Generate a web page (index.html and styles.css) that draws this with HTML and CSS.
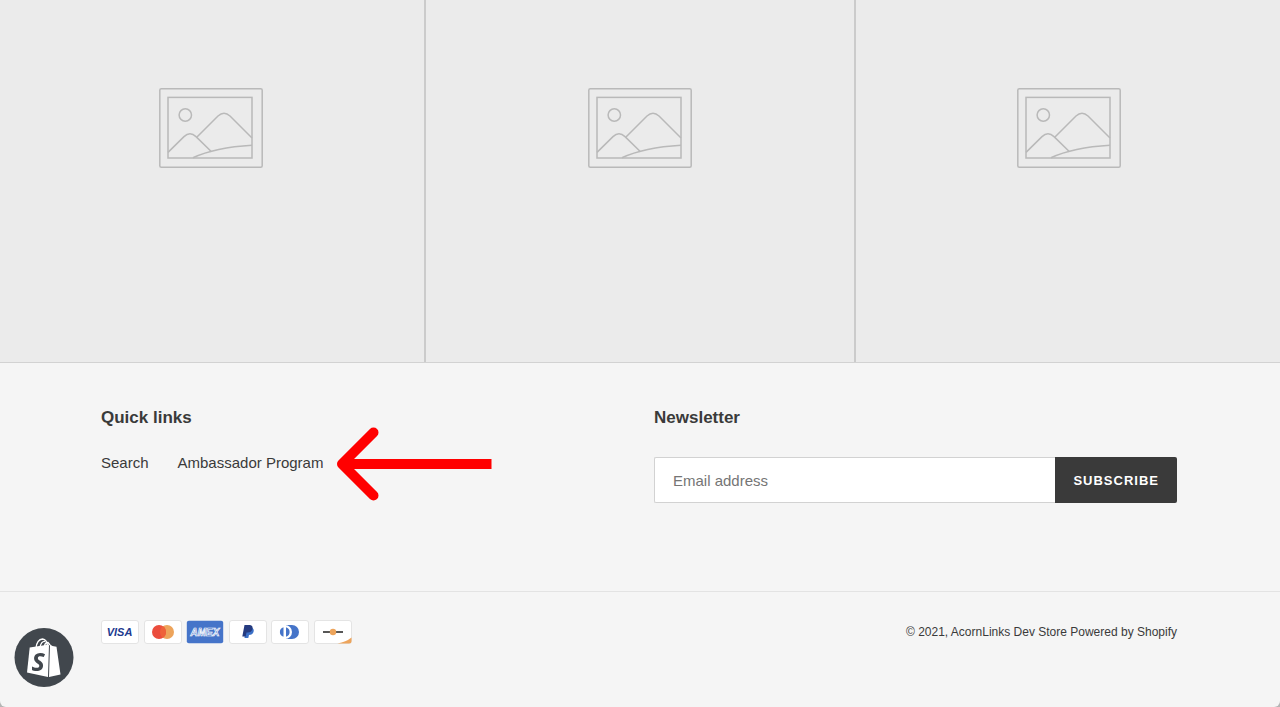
FILE: index.html
```html
<!DOCTYPE html>
<html lang="en">

<head>
    <meta charset="UTF-8">
    <meta name="viewport" content="width=device-width, initial-scale=1.0">
    <title>AcornLinks Dev Store</title>
    <link rel="stylesheet" href="styles.css">
</head>

<body>
    <svg class="sprite" aria-hidden="true">
        <symbol id="placeholder-image" viewBox="0 0 104 80">
            <g fill="none" stroke="#b9b9b9" stroke-width="1.5">
                <rect x="0.8" y="0.8" width="102.4" height="78.4" rx="1.5" />
                <rect x="9" y="9.4" width="84" height="60.6" />
                <circle cx="26.3" cy="27" r="6.2" />
                <path d="M9 64.4L25 48.6Q31 43 37 48.6L52.5 63.8" />
                <path d="M38 49L59 28Q65 22.5 71 28L93 50" />
                <path d="M34 69.8Q56 59.5 93 57.3" />
            </g>
        </symbol>
    </svg>

    <main class="gallery">
        <div class="gallery-item"><svg class="placeholder"><use href="#placeholder-image" /></svg></div>
        <div class="gallery-item"><svg class="placeholder"><use href="#placeholder-image" /></svg></div>
        <div class="gallery-item"><svg class="placeholder"><use href="#placeholder-image" /></svg></div>
    </main>

    <footer class="site-footer">
        <div class="footer-top">
            <section class="footer-block">
                <h2>Quick links</h2>
                <ul class="footer-links">
                    <li><a href="#search">Search</a></li>
                    <li class="highlighted">
                        <a href="#ambassador">Ambassador Program</a>
                        <svg class="arrow" viewBox="0 0 156 74" aria-hidden="true">
                            <path d="M155.5 37H7" />
                            <path class="arrow-head" d="M37.5 5.5L6 37L37.5 68.5" />
                        </svg>
                    </li>
                </ul>
            </section>

            <section class="footer-block">
                <h2><label for="email">Newsletter</label></h2>
                <form class="newsletter">
                    <input type="email" id="email" name="email" placeholder="Email address">
                    <button type="submit">Subscribe</button>
                </form>
            </section>
        </div>

        <div class="footer-bottom">
            <ul class="payment-icons">
                <li>
                    <svg viewBox="0 0 38 24" role="img" aria-label="Visa">
                        <rect class="card" x="0.5" y="0.5" width="37" height="23" rx="2.5" />
                        <text class="visa" x="18.5" y="16" text-anchor="middle">VISA</text>
                    </svg>
                </li>
                <li>
                    <svg viewBox="0 0 38 24" role="img" aria-label="Mastercard">
                        <rect class="card" x="0.5" y="0.5" width="37" height="23" rx="2.5" />
                        <circle cx="23" cy="12" r="7" fill="#eda45b" />
                        <circle cx="15" cy="12" r="7" fill="#eb4d3d" />
                        <path d="M19 6.3A7 7 0 0 1 19 17.7A7 7 0 0 1 19 6.3Z" fill="#ee6139" />
                    </svg>
                </li>
                <li>
                    <svg viewBox="0 0 38 24" role="img" aria-label="American Express">
                        <rect x="0.8" y="0.8" width="36.4" height="22.4" rx="2" fill="#4574c9" />
                        <text class="amex" x="19" y="15.5" text-anchor="middle">AMEX</text>
                    </svg>
                </li>
                <li>
                    <svg viewBox="0 0 38 24" role="img" aria-label="PayPal">
                        <rect class="card" x="0.5" y="0.5" width="37" height="23" rx="2.5" />
                        <path d="M16.5 7.5H22.500Q25.5 8.500 24.500 12Q23.5 15 20 15L19.3 18H15.5Z" fill="#3b70c7" />
                        <path d="M15.5 5H21Q24.2 5.500 23.5 9Q22.5 12.500 18.5 12.500H17.5L16.7 16.500H13.3Z" fill="#253b80" />
                    </svg>
                </li>
                <li>
                    <svg viewBox="0 0 38 24" role="img" aria-label="Diners Club">
                        <rect class="card" x="0.5" y="0.5" width="37" height="23" rx="2.5" />
                        <path d="M15 5H21A7 7 0 0 1 21 19H15Z" fill="#4574c9" />
                        <circle cx="14" cy="12" r="7" fill="#fff" />
                        <path d="M12.5 7.200A5 5 0 0 0 12.5 16.800ZM15 7.200A5 5 0 0 1 15 16.800Z" fill="#4574c9" />
                    </svg>
                </li>
                <li>
                    <svg viewBox="0 0 38 24" role="img" aria-label="Discover">
                        <rect class="card" x="0.5" y="0.5" width="37" height="23" rx="2.5" />
                        <path d="M23.5 23.500Q32 22 37.5 17.500V21Q37.5 23.500 35 23.500Z" fill="#eda45b" />
                        <path d="M9 12H29" stroke="#444" stroke-width="1.8" />
                        <circle cx="19" cy="12" r="3.2" fill="#eda45b" />
                    </svg>
                </li>
            </ul>
            <small class="copyright">&copy; 2021, <a href="#home">AcornLinks Dev Store</a> <a href="#shopify">Powered by Shopify</a></small>
        </div>
    </footer>

    <button type="button" class="preview-badge" aria-label="Shopify">
        <svg viewBox="0 0 60 60" aria-hidden="true">
            <circle cx="30" cy="29.5" r="29.5" fill="#41474d" />
            <g fill="none" stroke="#fff" stroke-width="1.3">
                <path d="M22 20Q23 11.500 28.5 11Q33 11.500 33.5 18" />
                <path d="M26 19Q27.5 13 31 13.500" />
                <path d="M30.500 18Q31 14.500 34 14.500L36 17" />
            </g>
            <path d="M15.7 19.500L35 16.500L34 49L13 44.500Z" fill="#fff" />
            <path d="M36 16.500L38.5 18L42.5 18.800L46.5 46.500L35 49Z" fill="#fff" />
            <text class="bag-letter" x="24" y="43" text-anchor="middle">S</text>
        </svg>
    </button>
</body>

</html>
```

FILE: styles.css
```css
* {
    box-sizing: border-box;
}

html {
    overflow-x: hidden;
    background-color: #b5b5b5;
}

body {
    display: flex;
    flex-direction: column;
    min-height: 100vh;
    margin: 0;
    overflow-x: hidden;
    font-family: "Liberation Sans", Arial, Helvetica, sans-serif;
    color: #3a3a3a;
    background-color: #f5f5f5;
    border-radius: 0 0 6px 6px;
}

a {
    color: inherit;
    text-decoration: none;
}

ul {
    list-style: none;
    margin: 0;
    padding: 0;
}

.sprite {
    display: none;
}

/* Image placeholders */
.gallery {
    display: grid;
    grid-template-columns: repeat(3, 1fr);
    gap: 2px;
    margin: 0 -3px;
    background-color: #cbcbcb;
    border-bottom: 1px solid #d2d2d2;
}

.gallery-item {
    padding: 88px 0 194px;
    background-color: #ebebeb;
}

.placeholder {
    display: block;
    width: 104px;
    height: 80px;
    margin: 0 auto;
}

/* Footer */
.site-footer {
    flex: 1;
}

.footer-top {
    display: grid;
    grid-template-columns: 1fr 1fr;
    gap: 30px;
    padding: 45px 103px 88px 101px;
    border-bottom: 1px solid #e3e3e3;
}

.footer-block h2 {
    margin: 0 0 29px;
    font-size: 17px;
    line-height: 20px;
}

.footer-links {
    display: flex;
    gap: 29px;
    font-size: 15px;
    line-height: 12px;
}

.highlighted {
    position: relative;
}

.arrow {
    position: absolute;
    top: 50%;
    left: 100%;
    width: 156px;
    height: 74px;
    margin: -36px 0 0 13px;
    fill: none;
    stroke: #ff0000;
    stroke-width: 10;
}

.arrow-head {
    stroke-linecap: round;
    stroke-linejoin: round;
}

.newsletter {
    display: flex;
}

.newsletter input {
    flex: 1;
    min-width: 0;
    height: 46px;
    padding: 0 18px;
    font-family: inherit;
    font-size: 15px;
    color: #3a3a3a;
    background-color: #fff;
    border: 1px solid #d2d2d2;
    border-right: 0;
    border-radius: 2px 0 0 2px;
}

.newsletter input::placeholder {
    color: #757575;
}

.newsletter button {
    height: 46px;
    padding: 0 18px;
    font-family: inherit;
    font-size: 13px;
    font-weight: bold;
    letter-spacing: 1px;
    text-transform: uppercase;
    color: #fff;
    background-color: #3a3a3a;
    border: 0;
    border-radius: 0 2px 2px 0;
}

.footer-bottom {
    display: flex;
    justify-content: space-between;
    align-items: center;
    padding: 28px 103px 62px 101px;
}

.payment-icons {
    display: flex;
    justify-content: space-between;
    width: 251px;
}

.payment-icons svg {
    display: block;
    width: 38px;
    height: 24px;
}

.card {
    fill: #fff;
    stroke: #e4e4e4;
}

.visa {
    font-size: 11px;
    font-weight: bold;
    font-style: italic;
    fill: #213a8f;
}

.amex {
    font-size: 10px;
    font-weight: bold;
    font-style: italic;
    fill: #4574c9;
    stroke: #fff;
    stroke-width: 0.7;
}

.copyright {
    font-size: 12px;
}

/* Floating badge */
.preview-badge {
    position: fixed;
    bottom: 19px;
    left: 14px;
    width: 60px;
    height: 60px;
    padding: 0;
    background: none;
    border: 0;
    cursor: pointer;
}

.preview-badge svg {
    display: block;
}

.bag-letter {
    font-family: "Open Sans", sans-serif;
    font-size: 25px;
    font-weight: bold;
    font-style: italic;
    fill: #41474d;
}
```
